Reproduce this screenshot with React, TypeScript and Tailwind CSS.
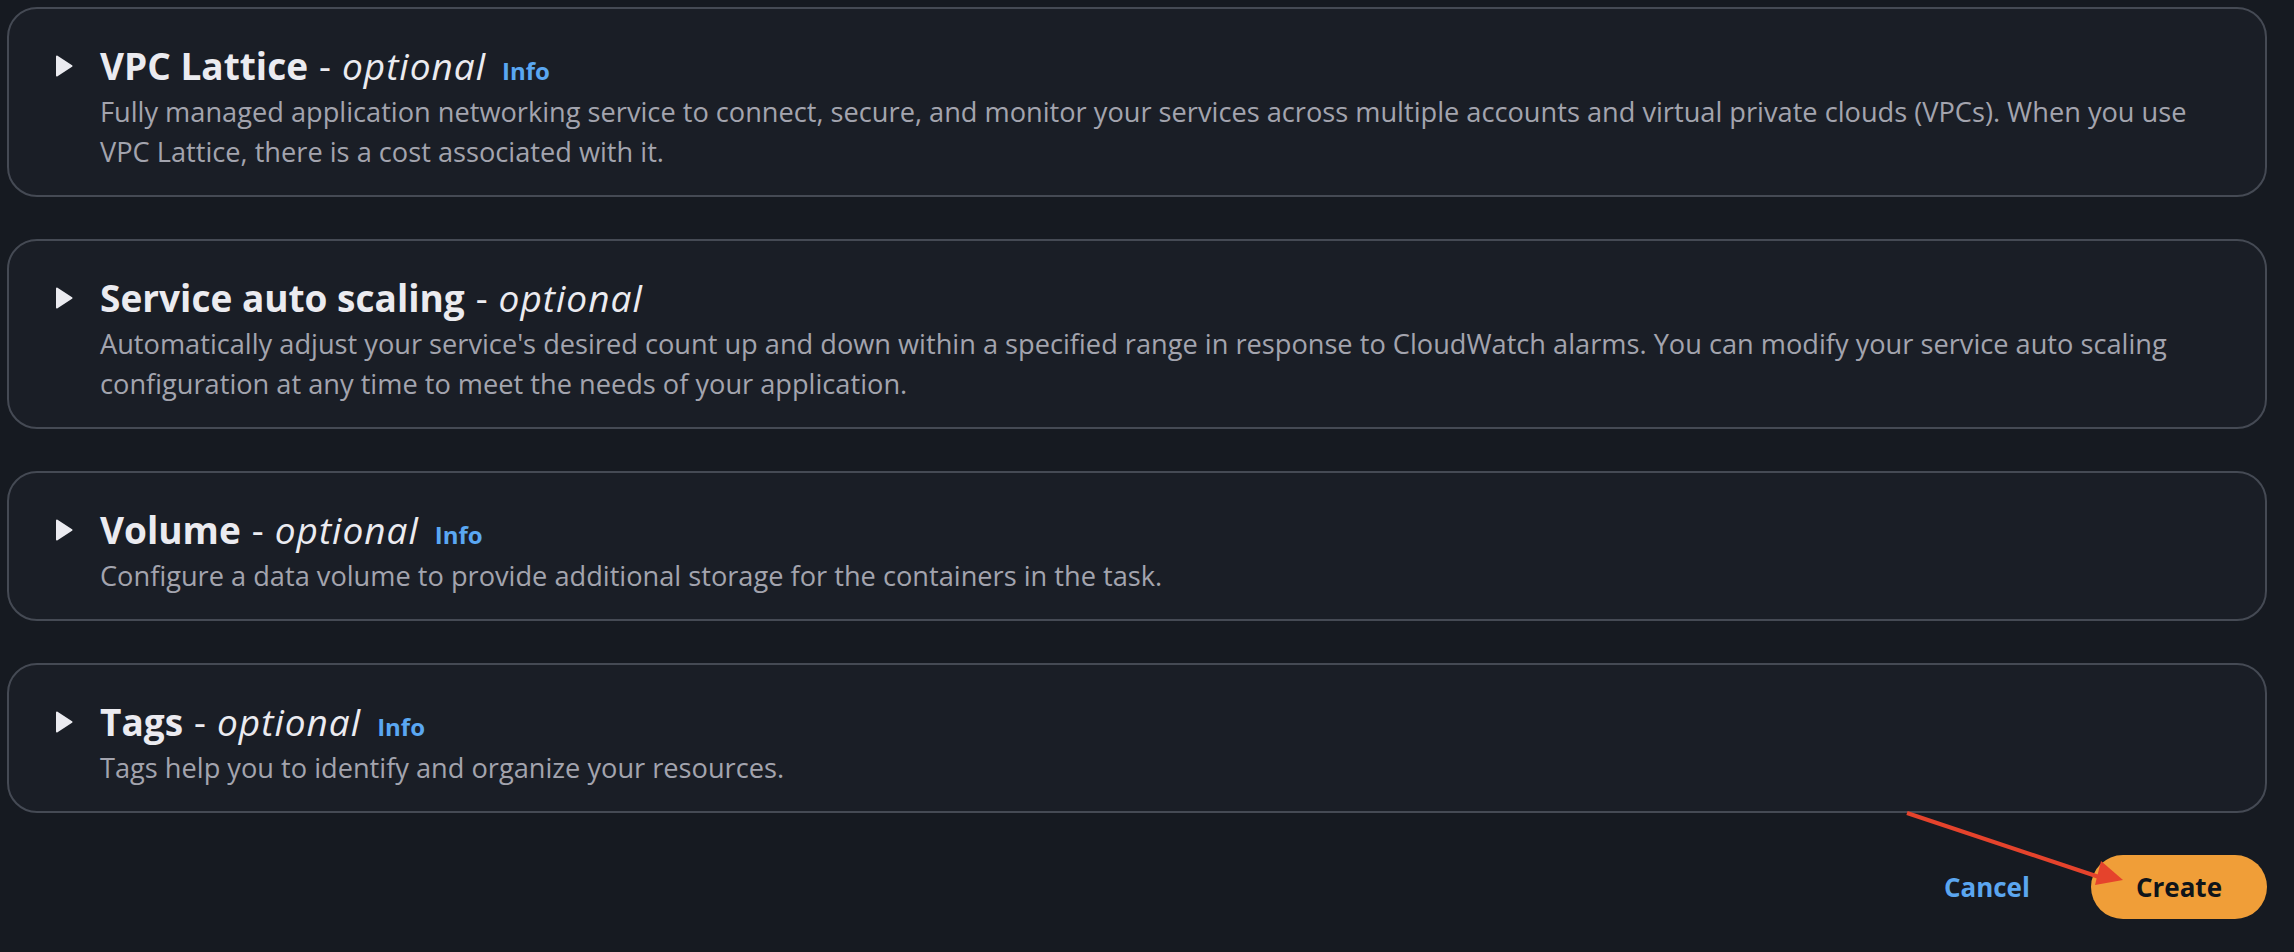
import type { ReactNode } from 'react';

type Section = {
  title: string;
  info?: boolean;
  description: ReactNode;
};

const sections: Section[] = [
  {
    title: 'VPC Lattice',
    info: true,
    description:
      'Fully managed application networking service to connect, secure, and monitor your services across multiple accounts and virtual private clouds (VPCs). When you use VPC Lattice, there is a cost associated with it.',
  },
  {
    title: 'Service auto scaling',
    description:
      "Automatically adjust your service's desired count up and down within a specified range in response to CloudWatch alarms. You can modify your service auto scaling configuration at any time to meet the needs of your application.",
  },
  {
    title: 'Volume',
    info: true,
    description:
      'Configure a data volume to provide additional storage for the containers in the task.',
  },
  {
    title: 'Tags',
    info: true,
    description: 'Tags help you to identify and organize your resources.',
  },
];

function Caret() {
  return (
    <svg width="18" height="24" viewBox="0 0 18 24" className="block">
      <path d="M2 2.5 L16.5 12 L2 21.5 Z" fill="#ebebf0" strokeLinejoin="round" stroke="#ebebf0" strokeWidth="2" />
    </svg>
  );
}

function ExpandableSection({ title, info, description }: Section) {
  return (
    <div className="flex rounded-[30px] border-2 border-[#454a54] bg-[#1a1e26] pt-[35px] pb-[23px] pl-[46px] pr-[40px]">
      <div className="flex h-[44px] w-[18px] shrink-0 items-center">
        <Caret />
      </div>
      <div className="ml-[27px] min-w-0 flex-1">
        <div className="flex h-[44px] items-baseline text-[37px] leading-[44px] text-[#ebebf0]">
          <span className="font-bold">{title}</span>
          <span className="ml-[11px] font-normal">-</span>
          <span className="ml-[11px] font-normal italic tracking-[1px]">optional</span>
          {info && (
            <span className="ml-[16px] text-[24px] font-bold text-[#5aa7f2]">Info</span>
          )}
        </div>
        <p className="mt-[4px] text-[27.2px] leading-[40px] text-[#a3a4ae]">{description}</p>
      </div>
    </div>
  );
}

export default function App() {
  return (
    <div
      className="relative h-[952px] w-[2294px] overflow-hidden bg-[#161a21] pt-[7px] pl-[7px] pr-[27px]"
      style={{ fontFamily: '"Open Sans", "Noto Sans", sans-serif' }}
    >
      <div className="flex flex-col gap-[42px]">
        {sections.map((s) => (
          <ExpandableSection key={s.title} {...s} />
        ))}
      </div>

      <div className="mt-[42px] flex items-center justify-end gap-[61px]">
        <button className="text-[26px] font-bold text-[#5ba6f0]">Cancel</button>
        <button className="flex h-[64px] items-center rounded-full bg-[#f09e38] px-[45px] text-[26px] font-bold text-[#0f141a]">
          Create
        </button>
      </div>

      {/* annotation arrow */}
      <svg className="pointer-events-none absolute left-0 top-0" width="2294" height="952">
        <line x1="1907" y1="813" x2="2105" y2="879" stroke="#e5432c" strokeWidth="4" />
        <polygon points="2095,885 2101,861 2123,880" fill="#e5432c" />
      </svg>
    </div>
  );
}
